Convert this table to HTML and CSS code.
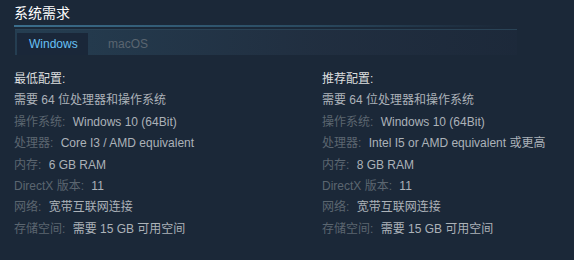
FILE: index.html
```html
<!DOCTYPE html>
<html lang="zh">
<head>
<meta charset="utf-8">
<link rel="stylesheet" href="styles.css">
</head>
<body>
<div class="sysreq">
  <h2 class="title">系统需求</h2>
  <div class="tabs">
    <div class="tab active">Windows</div>
    <div class="tab">macOS</div>
  </div>
  <div class="cols">
    <ul class="col">
      <li class="head">最低配置:</li>
      <li>需要 64 位处理器和操作系统</li>
      <li><span class="k">操作系统:</span> Windows 10 (64Bit)</li>
      <li><span class="k">处理器:</span> Core I3 / AMD equivalent</li>
      <li><span class="k">内存:</span> 6 GB RAM</li>
      <li><span class="k">DirectX 版本:</span> 11</li>
      <li><span class="k">网络:</span> 宽带互联网连接</li>
      <li><span class="k">存储空间:</span> 需要 15 GB 可用空间</li>
    </ul>
    <ul class="col right">
      <li class="head">推荐配置:</li>
      <li>需要 64 位处理器和操作系统</li>
      <li><span class="k">操作系统:</span> Windows 10 (64Bit)</li>
      <li><span class="k">处理器:</span> Intel I5 or AMD equivalent 或更高</li>
      <li><span class="k">内存:</span> 8 GB RAM</li>
      <li><span class="k">DirectX 版本:</span> 11</li>
      <li><span class="k">网络:</span> 宽带互联网连接</li>
      <li><span class="k">存储空间:</span> 需要 15 GB 可用空间</li>
    </ul>
  </div>
</div>
</body>
</html>
```

FILE: styles.css
```css
html, body {
  margin: 0;
  padding: 0;
  background: #1b2838;
  height: 260px;
  overflow: hidden;
}
body {
  font-family: "Liberation Sans", "Noto Sans CJK SC", sans-serif;
  color: #acb2b8;
  font-size: 12px;
}
.sysreq {
  padding: 4px 0 0 14px;
}
.title {
  margin: 0;
  font-size: 14px;
  font-weight: normal;
  color: #ffffff;
  line-height: 18px;
  background-image: linear-gradient(90deg, #3b6e8c 0%, #2a4a60 60%, rgba(42, 71, 94, 0.3) 88%, rgba(42, 71, 94, 0) 100%);
  background-size: 100% 2px;
  background-position: 0 100%;
  background-repeat: no-repeat;
  width: 490px;
  padding-bottom: 5px;
}
.tabs {
  display: flex;
  margin: 2px 0 0 1px;
  padding: 3px 0 0 2px;
  width: 500px;
  height: 22px;
  background: linear-gradient(90deg, rgba(38, 64, 84, 0.9) 0%, rgba(34, 48, 66, 0.8) 60%, rgba(30, 42, 60, 0.5) 100%);
  border-top: 1px solid #2a4356;
}
.tab {
  padding: 0 0 0 20px;
  line-height: 22px;
  font-size: 12px;
  color: #5a6570;
}
.tab.active {
  background: #1a2739;
  color: #67c1f5;
  width: 47px;
  padding: 0 12px;
}
.cols {
  display: flex;
  margin-top: 14px;
}
.col {
  list-style: none;
  margin: 0;
  padding: 0;
  width: 308px;
  flex-shrink: 0;
}
.col.right {
  width: auto;
  flex: 1 1 auto;
  min-width: 0;
}
.col li {
  line-height: 21.4px;
  height: 21.4px;
  white-space: nowrap;
}
.col li.head {
  color: #dcdedf;
}
.k {
  color: #5b6670;
  margin-right: 4px;
}
```
